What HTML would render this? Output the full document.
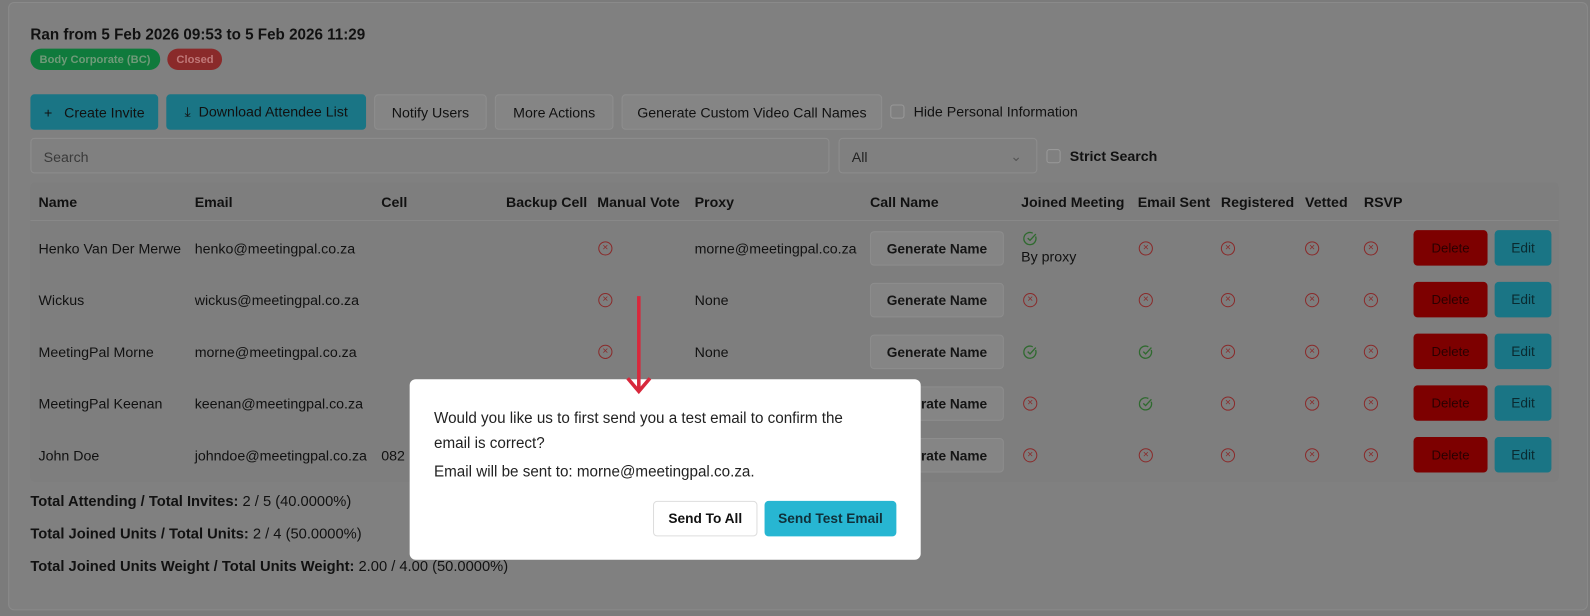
<!DOCTYPE html>
<html><head><style>
*{box-sizing:border-box;margin:0;padding:0}
body{width:1590px;height:615px;background:#7b7b7b;font-family:"Liberation Sans",sans-serif;color:#111;position:relative;overflow:hidden;font-size:14px}
#w{position:absolute;left:0;top:0;width:1568px;height:607px;transform:scale(1.014);transform-origin:0 0}
.a{position:absolute;white-space:nowrap}
.card{position:absolute;left:8px;top:2px;width:1558px;height:600px;background:#808080;border:1px solid #8a8a8a;border-radius:6px}
.btn{position:absolute;top:93px;height:35px;border-radius:4px;display:flex;align-items:center;justify-content:center;font-size:14px}
.teal{background:#1a7585;}
.gray{background:#858585;border:1px solid #8e8e8e}
.badge{position:absolute;top:48px;height:21px;border-radius:11px;font-size:11px;display:flex;align-items:center;padding:0 9px;color:#6f9a78;font-weight:bold}
.x{position:absolute;width:14px;height:14px;border:1.3px solid #8a2a2a;border-radius:50%;color:#8a2a2a;font-size:10px;line-height:11px;text-align:center}
.ck{position:absolute;width:14px;height:14px}
.gen{position:absolute;left:858px;width:132px;height:34px;background:#858585;border:1px solid #8d8d8d;border-radius:4px;display:flex;align-items:center;justify-content:center;font-weight:bold;font-size:13.5px;color:#151515}
.del{position:absolute;left:1394px;width:73px;height:35px;background:#7d0000;border-radius:4px;display:flex;align-items:center;justify-content:center;color:#2a0000;font-size:13px}
.ed{position:absolute;left:1474px;width:56px;height:35px;background:#1a7585;border-radius:4px;display:flex;align-items:center;justify-content:center;font-size:13.5px;color:#0a2a30}
.hd{font-weight:bold;top:191px;font-size:14px}
</style></head><body>
<svg width="0" height="0" style="position:absolute"><defs><symbol id="c" viewBox="0 0 14 14"><path d="M12.3 5.2A6 6 0 1 1 9.5 2" fill="none" stroke="#2f6a2f" stroke-width="1.3"/><path d="M4.5 6.8 L6.8 9 L12.5 2.8" fill="none" stroke="#2f6a2f" stroke-width="1.3"/></symbol></defs></svg>
<div id="w">
<div class="card"></div>
<div class="a" style="left:30px;top:26px;font-size:15px;font-weight:bold">Ran from 5 Feb 2026 09:53 to 5 Feb 2026 11:29</div>
<div class="badge" style="left:30px;width:128px;background:#0f7a3c">Body Corporate (BC)</div>
<div class="badge" style="left:165px;width:54px;background:#8a2a2a;color:#c07878">Closed</div>
<div class="btn teal" style="left:30px;width:126px">+&nbsp;&nbsp; Create Invite</div>
<div class="btn teal" style="left:164px;width:197px">⤓&nbsp; Download Attendee List</div>
<div class="btn gray" style="left:369px;width:111px">Notify Users</div>
<div class="btn gray" style="left:488px;width:117px">More Actions</div>
<div class="btn gray" style="left:613px;width:257px">Generate Custom Video Call Names</div>
<div class="a" style="left:878px;top:103px;width:14px;height:14px;border:1px solid #999;border-radius:3px"></div>
<div class="a" style="left:901px;top:102px">Hide Personal Information</div>
<div class="a" style="left:30px;top:136px;width:788px;height:35px;border:1px solid #8d8d8d;border-radius:4px;padding:10px 12px;color:#3a3a3a">Search</div>
<div class="a" style="left:827px;top:136px;width:196px;height:35px;border:1px solid #8d8d8d;border-radius:4px;padding:10px 12px;color:#222">All<span style="position:absolute;right:14px;top:9px;color:#555">⌄</span></div>
<div class="a" style="left:1032px;top:147px;width:14px;height:14px;border:1px solid #999;border-radius:3px"></div>
<div class="a" style="left:1055px;top:146px;font-weight:bold">Strict Search</div>
<div class="a" style="left:30px;top:180px;width:1507px;height:295px;background:#7e7e7e;border-radius:4px"></div>
<div class="a" style="left:30px;top:217px;width:1507px;height:1px;background:#888"></div>
<div class="a hd" style="left:38px">Name</div><div class="a hd" style="left:192px">Email</div><div class="a hd" style="left:376px">Cell</div><div class="a hd" style="left:499px">Backup Cell</div><div class="a hd" style="left:589px">Manual Vote</div><div class="a hd" style="left:685px">Proxy</div><div class="a hd" style="left:858px">Call Name</div><div class="a hd" style="left:1007px">Joined Meeting</div><div class="a hd" style="left:1122px">Email Sent</div><div class="a hd" style="left:1204px">Registered</div><div class="a hd" style="left:1287px">Vetted</div><div class="a hd" style="left:1345px">RSVP</div>

<div class="a" style="left:38px;top:237px">Henko Van Der Merwe</div><div class="a" style="left:192px;top:237px">henko@meetingpal.co.za</div><div class="x" style="left:590px;top:238px">×</div><div class="a" style="left:685px;top:237px">morne@meetingpal.co.za</div><div class="gen" style="top:228px">Generate Name</div>
<svg class="ck" style="left:1009px;top:228px"><use href="#c"/></svg><div class="a" style="left:1007px;top:245px">By proxy</div>
<div class="x" style="left:1123px;top:238px">×</div><div class="x" style="left:1204px;top:238px">×</div><div class="x" style="left:1287px;top:238px">×</div><div class="x" style="left:1345px;top:238px">×</div><div class="del" style="top:227px">Delete</div><div class="ed" style="top:227px">Edit</div>

<div class="a" style="left:38px;top:288px">Wickus</div><div class="a" style="left:192px;top:288px">wickus@meetingpal.co.za</div><div class="x" style="left:590px;top:289px">×</div><div class="a" style="left:685px;top:288px">None</div><div class="gen" style="top:279px">Generate Name</div>
<div class="x" style="left:1009px;top:289px">×</div><div class="x" style="left:1123px;top:289px">×</div><div class="x" style="left:1204px;top:289px">×</div><div class="x" style="left:1287px;top:289px">×</div><div class="x" style="left:1345px;top:289px">×</div><div class="del" style="top:278px">Delete</div><div class="ed" style="top:278px">Edit</div>

<div class="a" style="left:38px;top:339px">MeetingPal Morne</div><div class="a" style="left:192px;top:339px">morne@meetingpal.co.za</div><div class="x" style="left:590px;top:340px">×</div><div class="a" style="left:685px;top:339px">None</div><div class="gen" style="top:330px">Generate Name</div>
<svg class="ck" style="left:1009px;top:340px"><use href="#c"/></svg><svg class="ck" style="left:1123px;top:340px"><use href="#c"/></svg><div class="x" style="left:1204px;top:340px">×</div><div class="x" style="left:1287px;top:340px">×</div><div class="x" style="left:1345px;top:340px">×</div><div class="del" style="top:329px">Delete</div><div class="ed" style="top:329px">Edit</div>

<div class="a" style="left:38px;top:390px">MeetingPal Keenan</div><div class="a" style="left:192px;top:390px">keenan@meetingpal.co.za</div><div class="gen" style="top:381px">Generate Name</div>
<div class="x" style="left:1009px;top:391px">×</div><svg class="ck" style="left:1123px;top:391px"><use href="#c"/></svg><div class="x" style="left:1204px;top:391px">×</div><div class="x" style="left:1287px;top:391px">×</div><div class="x" style="left:1345px;top:391px">×</div><div class="del" style="top:380px">Delete</div><div class="ed" style="top:380px">Edit</div>

<div class="a" style="left:38px;top:441px">John Doe</div><div class="a" style="left:192px;top:441px">johndoe@meetingpal.co.za</div><div class="a" style="left:376px;top:441px">082</div><div class="gen" style="top:432px">Generate Name</div>
<div class="x" style="left:1009px;top:442px">×</div><div class="x" style="left:1123px;top:442px">×</div><div class="x" style="left:1204px;top:442px">×</div><div class="x" style="left:1287px;top:442px">×</div><div class="x" style="left:1345px;top:442px">×</div><div class="del" style="top:431px">Delete</div><div class="ed" style="top:431px">Edit</div>

<div class="a" style="left:30px;top:487px;font-size:14.5px"><b>Total Attending / Total Invites:</b> 2 / 5 (40.0000%)</div>
<div class="a" style="left:30px;top:519px;font-size:14.5px"><b>Total Joined Units / Total Units:</b> 2 / 4 (50.0000%)</div>
<div class="a" style="left:30px;top:551px;font-size:14.5px"><b>Total Joined Units Weight / Total Units Weight:</b> 2.00 / 4.00 (50.0000%)</div>

<div class="a" style="left:404px;top:374px;width:504px;height:178px;background:#fff;border-radius:6px"></div>
<div class="a" style="left:428px;top:400px;font-size:15px;line-height:25px;color:#222;white-space:normal;width:440px">Would you like us to first send you a test email to confirm the email is correct?</div>
<div class="a" style="left:428px;top:457px;font-size:15px;color:#222">Email will be sent to: morne@meetingpal.co.za.</div>
<div class="a" style="left:644px;top:494px;width:103px;height:35px;border:1px solid #ddd;border-radius:4px;display:flex;align-items:center;justify-content:center;font-weight:bold;font-size:13.5px">Send To All</div>
<div class="a" style="left:754px;top:494px;width:130px;height:35px;background:#27b6d2;border-radius:4px;display:flex;align-items:center;justify-content:center;font-weight:bold;font-size:13.5px;color:#10303a">Send Test Email</div>
<svg class="a" style="left:614px;top:290px" width="34" height="102"><path d="M16 2 V96 M5 83 L16 96 L27 83" stroke="#d8283c" stroke-width="3.5" fill="none"/></svg>
</div>
</body></html>
